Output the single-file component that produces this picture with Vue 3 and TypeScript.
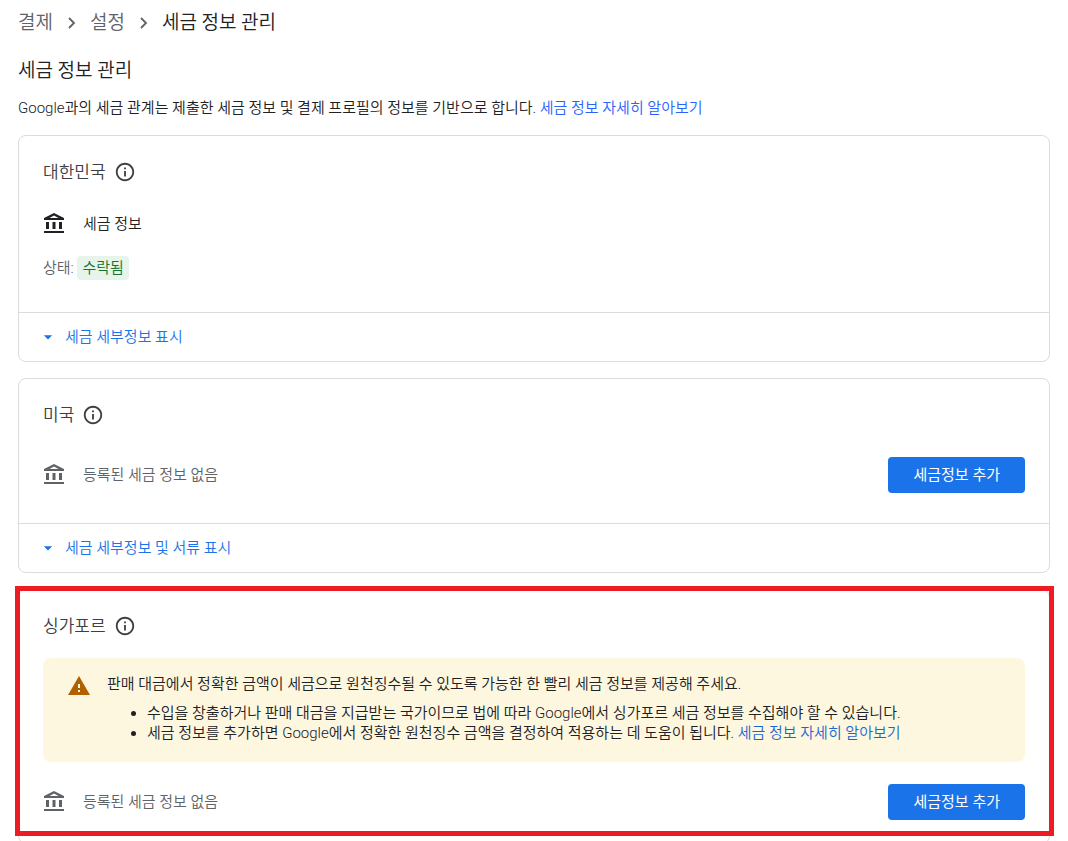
<script setup lang="ts">
interface Country {
  id: string
  name: string
  registered: boolean
  details?: string
  warning?: boolean
}

const crumbs: string[] = ['결제', '설정']

const countries: Country[] = [
  { id: 'kr', name: '대한민국', registered: true, details: '세금 세부정보 표시' },
  { id: 'us', name: '미국', registered: false, details: '세금 세부정보 및 서류 표시' },
  { id: 'sg', name: '싱가포르', registered: false, warning: true },
]
</script>

<template>
  <main class="page">
    <nav class="crumbs" aria-label="탐색경로">
      <template v-for="crumb in crumbs" :key="crumb">
        <a href="#" class="crumb">{{ crumb }}</a>
        <svg class="chevron" viewBox="0 0 20 20" aria-hidden="true">
          <path d="M7.500 5l5 5-5 5" />
        </svg>
      </template>
      <span class="current" aria-current="page">세금 정보 관리</span>
    </nav>

    <h1 class="title">세금 정보 관리</h1>
    <p class="intro">
      Google과의 세금 관계는 제출한 세금 정보 및 결제 프로필의 정보를 기반으로 합니다.
      <a href="#" class="intro-link">세금 정보 자세히 알아보기</a>
    </p>

    <div class="cards">
      <section v-for="country in countries" :key="country.id" class="card" :class="country.id">
        <div class="body">
          <header class="head">
            <h2>{{ country.name }}</h2>
            <button type="button" class="info" :aria-label="country.name">
              <svg viewBox="0 0 24 24" aria-hidden="true">
                <path d="M11 7h2v2h-2zm0 4h2v6h-2zm1-9C6.480 2 2 6.480 2 12s4.480 10 10 10 10-4.480 10-10S17.520 2 12 2zm0 18c-4.410 0-8-3.590-8-8s3.590-8 8-8 8 3.590 8 8-3.590 8-8 8z" />
              </svg>
            </button>
          </header>

          <div v-if="country.warning" class="alert" role="alert">
            <svg class="warn" viewBox="0 0 24 24" aria-hidden="true">
              <path d="M1 21h22L12 2 1 21zm12-3h-2v-2h2v2zm0-4h-2v-4h2v4z" />
            </svg>
            <div>
              <p>판매 대금에서 정확한 금액이 세금으로 원천징수될 수 있도록 가능한 한 빨리 세금 정보를 제공해 주세요.</p>
              <ul>
                <li>수입을 창출하거나 판매 대금을 지급받는 국가이므로 법에 따라 Google에서 싱가포르 세금 정보를 수집해야 할 수 있습니다.</li>
                <li>
                  세금 정보를 추가하면 Google에서 정확한 원천징수 금액을 결정하여 적용하는 데 도움이 됩니다.
                  <a href="#">세금 정보 자세히 알아보기</a>
                </li>
              </ul>
            </div>
          </div>

          <div class="record" :class="{ empty: !country.registered }">
            <svg class="bank" viewBox="0 0 24 24" aria-hidden="true">
              <path fill-rule="evenodd" d="M11 1L1 6v2h20V6zM11 3.500L15.500 6h-9zM3 10h3v7H3zM9.500 10h3v7h-3zM16 10h3v7h-3zM1 19h20v2H1z" />
            </svg>
            <span class="label">{{ country.registered ? '세금 정보' : '등록된 세금 정보 없음' }}</span>
            <button v-if="!country.registered" type="button" class="add">세금정보 추가</button>
          </div>

          <div v-if="country.registered" class="status">
            상태: <span class="chip">수락됨</span>
          </div>
        </div>

        <button v-if="country.details" type="button" class="more">
          <svg viewBox="0 0 24 24" aria-hidden="true"><path d="M7 10l5 5 5-5z" /></svg>
          {{ country.details }}
        </button>
        <div v-if="country.warning" class="highlight" aria-hidden="true"></div>
      </section>
    </div>
  </main>
</template>

<style>
html,
body {
  margin: 0;
  background: #fff;
}
</style>

<style scoped>
.page {
  box-sizing: border-box;
  height: 100vh;
  overflow: hidden;
  padding: 9px 18px 0;
  font-family: Roboto, "Noto Sans CJK KR", sans-serif;
  font-size: 15px;
  font-weight: 350;
  line-height: 20px;
  color: #202124;
}
h1,
h2,
p,
ul {
  margin: 0;
  font-weight: inherit;
}
a {
  color: #1967d2;
  text-decoration: none;
}
button {
  font: inherit;
  border: 0;
  background: none;
  padding: 0;
  cursor: pointer;
}
.crumbs {
  display: flex;
  align-items: center;
  gap: 8px;
  height: 28px;
  font-size: 19px;
  line-height: 28px;
}
.crumb {
  color: #5f6368;
}
.chevron {
  width: 21px;
  height: 20px;
  fill: none;
  stroke: #5f6368;
  stroke-width: 1.8;
}
.title {
  margin-top: 20px;
  font-size: 19px;
  line-height: 28px;
}
.intro {
  margin-top: 13px;
}
.intro-link {
  color: #2962ff;
}
.cards {
  display: flex;
  flex-direction: column;
  gap: 16px;
  margin-top: 17px;
}
.card {
  position: relative;
  border: 1px solid #dadce0;
  border-radius: 8px;
}
.body {
  padding: 24px 24px 30px;
}
.kr .body {
  padding-bottom: 32px;
}
.sg .body {
  padding-bottom: 23px;
}
.head {
  display: flex;
  align-items: center;
  gap: 8px;
  height: 24px;
  color: #3c4043;
}
.head h2 {
  font-size: 17px;
  line-height: 24px;
}
.info {
  display: flex;
}
.info svg {
  width: 22px;
  height: 22px;
  fill: #3c4043;
}
.record {
  display: flex;
  align-items: center;
  min-height: 36px;
  margin-top: 22px;
}
.us .record {
  margin-top: 30px;
}
.bank {
  width: 24px;
  height: 24px;
  margin-right: 16px;
  fill: #202124;
}
.empty {
  color: #5f6368;
}
.empty .bank {
  fill: #5f6368;
}
.add {
  margin-left: auto;
  height: 36px;
  padding: 0 25px;
  border-radius: 4px;
  background: #1a73e8;
  color: #fff;
  font-weight: 400;
}
.status {
  margin-top: 14px;
  line-height: 24px;
  color: #5f6368;
}
.chip {
  display: inline-block;
  padding: 0 5px;
  border-radius: 4px;
  background: #e6f4ea;
  color: #137333;
}
.more {
  display: flex;
  align-items: center;
  gap: 7px;
  width: 100%;
  height: 49px;
  padding: 0 19px;
  border-top: 1px solid #dadce0;
  color: #1a73e8;
}
.more svg {
  width: 20px;
  height: 20px;
  fill: #1a73e8;
}
.alert {
  display: flex;
  gap: 16px;
  margin-top: 20px;
  padding: 16px 24px 19px;
  border-radius: 8px;
  background: #fef7e0;
}
.warn {
  flex: none;
  width: 24px;
  height: 24px;
  fill: #b06000;
}
.alert ul {
  margin-top: 9px;
  padding-left: 40px;
}
.highlight {
  position: absolute;
  inset: -4px -5px 7px -4px;
  border: 5px solid #ed1c24;
  pointer-events: none;
}
</style>
